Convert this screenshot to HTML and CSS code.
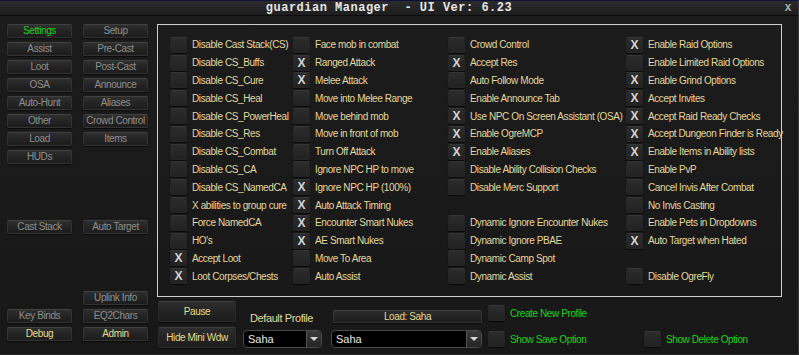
FILE: index.html
```html
<!DOCTYPE html>
<html lang="en">
<head>
    <meta charset="UTF-8">
    <title>guardian Manager</title>
    <link rel="stylesheet" href="styles.css">
</head>
<body>
    <div class="window">
        <div class="titlebar">
            <span class="title">guardian Manager&nbsp; - UI Ver: 6.23</span>
            <span class="close">X</span>
        </div>

        <div class="content">
            <!-- left tab buttons -->
            <div class="sidebar">
                <div class="btn-grid">
                    <div class="btn active">Settings</div>
                    <div class="btn">Setup</div>
                    <div class="btn">Assist</div>
                    <div class="btn">Pre-Cast</div>
                    <div class="btn">Loot</div>
                    <div class="btn">Post-Cast</div>
                    <div class="btn">OSA</div>
                    <div class="btn">Announce</div>
                    <div class="btn">Auto-Hunt</div>
                    <div class="btn">Aliases</div>
                    <div class="btn">Other</div>
                    <div class="btn">Crowd Control</div>
                    <div class="btn">Load</div>
                    <div class="btn">Items</div>
                    <div class="btn">HUDs</div>
                </div>
                <div class="btn-grid group-mid">
                    <div class="btn">Cast Stack</div>
                    <div class="btn">Auto Target</div>
                </div>
                <div class="btn-grid group-low">
                    <div class="spacer"></div>
                    <div class="btn">Uplink Info</div>
                    <div class="btn">Key Binds</div>
                    <div class="btn">EQ2Chars</div>
                    <div class="btn yellow">Debug</div>
                    <div class="btn yellow">Admin</div>
                </div>
            </div>

            <div class="main">
                <!-- options panel, filled column by column -->
                <div class="panel">
                    <div class="opt"><span class="box"></span>Disable Cast Stack(CS)</div>
                    <div class="opt"><span class="box"></span>Disable CS_Buffs</div>
                    <div class="opt"><span class="box"></span>Disable CS_Cure</div>
                    <div class="opt"><span class="box"></span>Disable CS_Heal</div>
                    <div class="opt"><span class="box"></span>Disable CS_PowerHeal</div>
                    <div class="opt"><span class="box"></span>Disable CS_Res</div>
                    <div class="opt"><span class="box"></span>Disable CS_Combat</div>
                    <div class="opt"><span class="box"></span>Disable CS_CA</div>
                    <div class="opt"><span class="box"></span>Disable CS_NamedCA</div>
                    <div class="opt"><span class="box"></span>X abilities to group cure</div>
                    <div class="opt"><span class="box"></span>Force NamedCA</div>
                    <div class="opt"><span class="box"></span>HO's</div>
                    <div class="opt"><span class="box checked">X</span>Accept Loot</div>
                    <div class="opt"><span class="box checked">X</span>Loot Corpses/Chests</div>

                    <div class="opt"><span class="box"></span>Face mob in combat</div>
                    <div class="opt"><span class="box checked">X</span>Ranged Attack</div>
                    <div class="opt"><span class="box checked">X</span>Melee Attack</div>
                    <div class="opt"><span class="box"></span>Move into Melee Range</div>
                    <div class="opt"><span class="box"></span>Move behind mob</div>
                    <div class="opt"><span class="box"></span>Move in front of mob</div>
                    <div class="opt"><span class="box"></span>Turn Off Attack</div>
                    <div class="opt"><span class="box"></span>Ignore NPC HP to move</div>
                    <div class="opt"><span class="box checked">X</span>Ignore NPC HP (100%)</div>
                    <div class="opt"><span class="box checked">X</span>Auto Attack Timing</div>
                    <div class="opt"><span class="box checked">X</span>Encounter Smart Nukes</div>
                    <div class="opt"><span class="box checked">X</span>AE Smart Nukes</div>
                    <div class="opt"><span class="box"></span>Move To Area</div>
                    <div class="opt"><span class="box"></span>Auto Assist</div>

                    <div class="opt"><span class="box"></span>Crowd Control</div>
                    <div class="opt"><span class="box checked">X</span>Accept Res</div>
                    <div class="opt"><span class="box"></span>Auto Follow Mode</div>
                    <div class="opt"><span class="box"></span>Enable Announce Tab</div>
                    <div class="opt"><span class="box checked">X</span>Use NPC On Screen Assistant (OSA)</div>
                    <div class="opt"><span class="box checked">X</span>Enable OgreMCP</div>
                    <div class="opt"><span class="box checked">X</span>Enable Aliases</div>
                    <div class="opt"><span class="box"></span>Disable Ability Collision Checks</div>
                    <div class="opt"><span class="box"></span>Disable Merc Support</div>
                    <div class="opt"></div>
                    <div class="opt"><span class="box"></span>Dynamic Ignore Encounter Nukes</div>
                    <div class="opt"><span class="box"></span>Dynamic Ignore PBAE</div>
                    <div class="opt"><span class="box"></span>Dynamic Camp Spot</div>
                    <div class="opt"><span class="box"></span>Dynamic Assist</div>

                    <div class="opt"><span class="box checked">X</span>Enable Raid Options</div>
                    <div class="opt"><span class="box"></span>Enable Limited Raid Options</div>
                    <div class="opt"><span class="box checked">X</span>Enable Grind Options</div>
                    <div class="opt"><span class="box checked">X</span>Accept Invites</div>
                    <div class="opt"><span class="box checked">X</span>Accept Raid Ready Checks</div>
                    <div class="opt"><span class="box checked">X</span>Accept Dungeon Finder is Ready</div>
                    <div class="opt"><span class="box checked">X</span>Enable Items in Ability lists</div>
                    <div class="opt"><span class="box"></span>Enable PvP</div>
                    <div class="opt"><span class="box"></span>Cancel Invis After Combat</div>
                    <div class="opt"><span class="box"></span>No Invis Casting</div>
                    <div class="opt"><span class="box"></span>Enable Pets in Dropdowns</div>
                    <div class="opt"><span class="box checked">X</span>Auto Target when Hated</div>
                    <div class="opt"></div>
                    <div class="opt"><span class="box"></span>Disable OgreFly</div>
                </div>

                <!-- profile controls -->
                <div class="controls">
                    <div class="btn big">Pause</div>
                    <div class="profile-label">Default Profile</div>
                    <div class="btn load">Load: Saha</div>
                    <div class="opt green"><span class="box"></span>Create New Profile</div>
                    <div></div>

                    <div class="btn big">Hide Mini Wdw</div>
                    <div class="select small"><span class="value">Saha</span><span class="arrow"></span></div>
                    <div class="select wide"><span class="value">Saha</span><span class="arrow"></span></div>
                    <div class="opt green"><span class="box"></span>Show Save Option</div>
                    <div class="opt green"><span class="box"></span>Show Delete Option</div>
                </div>
            </div>
        </div>
    </div>
</body>
</html>
```

FILE: styles.css
```css
body {
    margin: 0;
    padding: 0;
    background-color: #000000;
    font-family: 'Liberation Sans', Arial, sans-serif;
    font-size: 10px;
    letter-spacing: -0.4px;
}
.window {
    width: 799px;
    height: 355px;
    box-sizing: border-box;
    background-color: #1a1a1a;
    background-image: linear-gradient(180deg, #1c1c1c 0%, #181818 100%);
    border-right: 1px solid #3a3a3a;
    border-bottom: 1px solid #2a2a2a;
    overflow: hidden;
}
.titlebar {
    height: 16px;
    box-sizing: border-box;
    padding-right: 20px;
    border-top: 1px solid #10103a;
    border-bottom: 1px solid #0c0c0c;
    background: linear-gradient(180deg, #2a2a2a 0%, #1e1e1e 100%);
    display: flex;
    align-items: center;
    justify-content: center;
    position: relative;
}
.title {
    font-family: 'Liberation Mono', monospace;
    font-weight: bold;
    font-size: 12px;
    letter-spacing: 0.5px;
    color: #e6e6e6;
    white-space: pre;
    line-height: 14px;
}
.close {
    position: absolute;
    right: 3px;
    top: 0;
    width: 14px;
    height: 14px;
    font-family: 'Liberation Mono', monospace;
    font-weight: bold;
    font-size: 11px;
    letter-spacing: 0;
    color: #b0b0b0;
    text-align: center;
    line-height: 15px;
}
.content {
    display: flex;
}
.sidebar {
    width: 150px;
    padding: 8px 0 0 7px;
}
.btn-grid {
    display: grid;
    grid-template-columns: 65px 65px;
    column-gap: 11px;
    row-gap: 4px;
}
.group-mid {
    margin-top: 56px;
}
.group-low {
    margin-top: 57px;
}
.btn {
    height: 14px;
    box-sizing: border-box;
    background: linear-gradient(180deg, #2e2e2e 0%, #232323 55%, #1d1d1d 100%);
    border: 1px solid #333333;
    border-top-color: #424242;
    border-radius: 2px;
    box-shadow: 0 1px 1px rgba(0, 0, 0, 0.6);
    color: #8e8e8e;
    text-align: center;
    line-height: 12px;
    white-space: nowrap;
    overflow: hidden;
}
.btn.active {
    color: #22d022;
}
.btn.yellow {
    color: #e6dc8c;
}
.main {
    flex: 1;
}
.panel {
    margin-top: 8px;
    width: 625px;
    height: 273px;
    box-sizing: border-box;
    border: 1px solid #cfcfcf;
    padding: 11px 0 0 12px;
    display: grid;
    grid-template-columns: 123px 155px 178px 1fr;
    grid-template-rows: repeat(14, 17.8px);
    grid-auto-flow: column;
}
.opt {
    display: flex;
    align-items: center;
    color: #e4d89c;
    white-space: nowrap;
}
.box {
    width: 17px;
    height: 16px;
    flex-shrink: 0;
    box-sizing: border-box;
    margin-right: 5px;
    background: linear-gradient(180deg, #2c2c2c 0%, #222222 100%);
    border: 1px solid #262626;
    border-top-color: #363636;
    border-radius: 2px;
    box-shadow: 0 1px 1px rgba(0, 0, 0, 0.7);
    font-weight: bold;
    font-size: 12px;
    letter-spacing: 0;
    color: #d4d4d4;
    text-align: center;
    line-height: 15px;
}
.controls {
    display: grid;
    grid-template-columns: 85px 88px 157px 156px 1fr;
    grid-template-rows: 26px 21px;
    margin: 4px 0 0 1px;
}
.btn.big {
    width: 78px;
    height: 21px;
    line-height: 19px;
    color: #e6dc8c;
    border-color: #2a2a2a;
    border-top-color: #3c3c3c;
}
.profile-label {
    align-self: end;
    margin: 0 0 2px 7px;
    color: #e4d89c;
    font-size: 11px;
    line-height: 13px;
}
.btn.load {
    align-self: end;
    margin: 0 0 4px 2px;
    width: 149px;
    height: 13px;
    line-height: 11px;
    color: #e6dc8c;
    border-radius: 2px 2px 0 0;
}
.opt.green {
    color: #1ed21e;
    align-self: start;
    margin-top: 4px;
}
.select {
    margin-top: 3px;
    height: 18px;
    box-sizing: border-box;
    background-color: #000000;
    border: 1px solid #4a4a4a;
    border-radius: 4px;
    display: flex;
    align-items: stretch;
    overflow: hidden;
}
.select.small {
    width: 79px;
}
.select.wide {
    width: 151px;
}
.select .value {
    flex: 1;
    padding-left: 4px;
    color: #e8e8e8;
    font-size: 11px;
    letter-spacing: 0;
    line-height: 16px;
}
.select .arrow {
    width: 14px;
    background: linear-gradient(180deg, #3a3a3a 0%, #262626 100%);
    border-left: 1px solid #555555;
    position: relative;
}
.select .arrow::after {
    content: "";
    position: absolute;
    left: 3px;
    top: 6px;
    border-left: 4px solid transparent;
    border-right: 4px solid transparent;
    border-top: 4px solid #d8d8d8;
}
```
